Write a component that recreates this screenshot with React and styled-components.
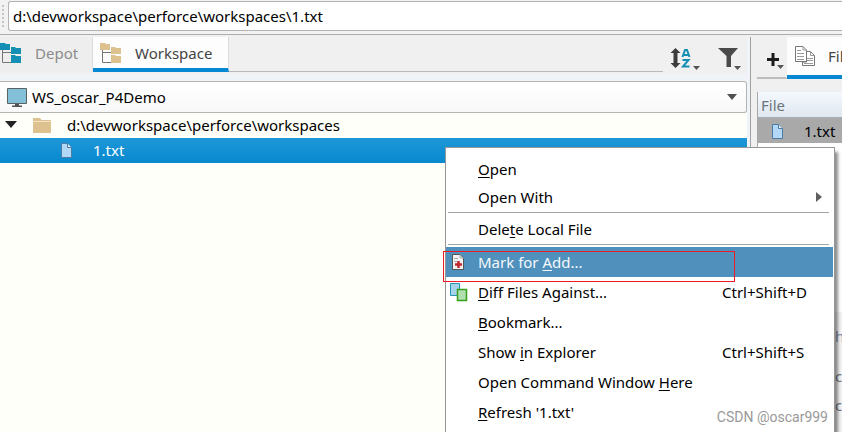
import styled, { createGlobalStyle } from "styled-components";

const GlobalStyle = createGlobalStyle`
* {
box-sizing: border-box;
}
body {
margin: 0;
background-color: #f0f0f0;
font-family: "Noto Sans", "Open Sans", sans-serif;
font-size: 15px;
line-height: 20px;
color: #000;
}
button, input, select {
font: inherit;
color: inherit;
margin: 0;
padding: 0;
border: none;
background: none;
outline: none;
}
`;

const Window = styled.div`position: relative;
height: 100vh;
display: flex;
flex-direction: column;
overflow: hidden;
`;
const AddressBar = styled.header`display: flex;
align-items: center;
gap: 4px;
padding: 1px 0 3px 2px;
border-bottom: 1px solid #adadad;
background-color: #f2f2f2;
`;
const Grip = styled.span`width: 2px;
height: 22px;
background: repeating-linear-gradient(#c4c4c4 0 2px, transparent 2px 4px);
`;
const Address = styled.input`flex: 1;
min-width: 0;
height: 30px;
padding: 0 4px;
border: 1px solid #b4b4b4;
border-right: none;
border-radius: 3px 0 0 3px;
background-color: #fff;
`;
const Main = styled.main`flex: 1;
min-height: 0;
display: flex;
padding-top: 2px;
`;
const LeftPane = styled.section`flex: 1;
min-width: 0;
display: flex;
flex-direction: column;
padding-right: 3px;
border-right: 1px solid #a0a0a0;
background-color: #f0f4f9;
`;
const RightPane = styled.section`flex: 0 0 91px;
display: flex;
flex-direction: column;
padding-left: 6px;
overflow: hidden;
`;
const TabBar = styled.div`display: flex;
height: 37px;
background-color: #f0f0f0;
`;
const TabList = styled.div`flex: 1;
height: 35px;
display: flex;
border-bottom: 1px solid #b8b8b8;
`;
const Tab = styled.button`height: ${p => p.$height || 35}px;
width: ${p => p.$width}px;
flex-shrink: 0;
display: flex;
align-items: center;
gap: 13px;
padding-left: ${p => p.$inset || 0}px;
color: ${p => (p.$active ? "#444" : "#8c8c8c")};
background-color: ${p => (p.$active ? "#fdfdfd" : "#eeeeee")};
border-bottom: 4px solid ${p => (p.$active ? "#0588d1" : "#eeeeee")};
border-right: 1px solid #dcdcdc;
white-space: nowrap;
`;
const Tools = styled.div`display: flex;
align-items: center;
gap: 18px;
padding: 6px 5px 0 7px;
`;
const ToolButton = styled.button`display: flex;
`;
const WorkspaceField = styled.label`display: flex;
align-items: center;
gap: 5px;
height: 32px;
margin-top: 7px;
padding: 0 9px 0 7px;
border: 1px solid #b4b4b4;
border-left: none;
border-radius: 0 3px 3px 0;
background: linear-gradient(#fff, #f8f8f8);
`;
const WorkspaceSelect = styled.select`flex: 1;
min-width: 0;
appearance: none;
`;
const Tree = styled.ul`flex: 1;
margin: 0;
padding: 0;
list-style: none;
background-color: #fffff9;
`;
const TreeRow = styled.li`display: flex;
align-items: center;
height: 25px;
gap: ${p => (p.$selected ? 21 : 16)}px;
padding: 0 0 2px ${p => (p.$selected ? 60 : 5)}px;
color: ${p => (p.$selected ? "#fff" : "#000")};
background: ${p => (p.$selected ? "linear-gradient(#1e97d8, #0789cf)" : "none")};
`;
const AddTab = styled.button`width: 30px;
flex-shrink: 0;
height: 42px;
padding: 10px 0 0 6px;
border-right: 1px solid #f0f0f0;
border-bottom: 2px solid #bdbdbd;
`;
const Files = styled.div`height: 220px;
margin-top: 18px;
border-left: 1px solid #a8a8a8;
background-color: #fff;
`;
const FileTable = styled.table`width: 100%;
border-collapse: collapse;
`;
const HeadCell = styled.th`height: 26px;
padding: 0 3px;
border-bottom: 2px solid #a9adb1;
background: linear-gradient(#f4f9fe, #dfe7ef);
color: #6b747c;
font-weight: 400;
text-align: left;
`;
const FileCell = styled.td`height: 25px;
padding: 0;
background-color: #a9a9a9;
`;
const FileName = styled.div`display: flex;
align-items: center;
gap: 21px;
padding-left: 13px;
`;
const Details = styled.div`flex: 1;
padding: 14px 0 0 78px;
background-color: #f2f2f2;
color: #6f7684;
`;
const DetailTitle = styled.p`margin: 0 0 20px;
color: #8492ab;
`;
const DetailLine = styled.p`margin: 0 0 9px;
`;
const Menu = styled.div`position: absolute;
top: 147px;
left: 445px;
width: 390px;
padding: 7px 1px 5px 0;
border: 1px solid #979797;
background-color: #fff;
box-shadow: 3px 5px 3px rgba(0, 0, 0, 0.45);
`;
const MenuItem = styled.button`position: relative;
width: 100%;
height: ${p => (p.$compact ? 28 : 30)}px;
display: grid;
grid-template-columns: 28px 1fr 111px;
align-items: center;
padding: 0 0 1px 4px;
text-align: left;
white-space: nowrap;
color: ${p => (p.$active ? "#f4f8fb" : "#000")};
background-color: ${p => (p.$active ? "#4f90bc" : "transparent")};
u {
text-decoration-thickness: 1px;
text-underline-offset: 2px;
}
`;
const SubmenuArrow = styled.svg`justify-self: end;
margin-right: 11px;
`;
const Separator = styled.hr`height: 1px;
margin: 1px 4px 2px 2px;
border: none;
background-color: #a5a5a5;
`;
const Highlight = styled.span`position: absolute;
top: 4px;
left: -3px;
width: 292px;
height: 31px;
border: 1px solid #ed1c24;
z-index: 1;
`;
const Watermark = styled.span`position: absolute;
right: 14px;
bottom: 5px;
font-family: Roboto, sans-serif;
font-size: 14px;
color: #999;
`;

const TreeIcon = ({ color }) => (
    <svg width="22" height="22" viewBox="0 0 22 22" aria-hidden="true">
        <path d="M2.500 6V20.500H11M2.500 10.500H11" fill="none" stroke="#777" />
        <path d="M0 1H5L6 2H10V8H0ZM11 5H15L16 6H21V12H11ZM11 13H15L16 14H21V21H11Z" fill={color} />
    </svg>
);

const FileIcon = () => (
    <svg width="12" height="16" viewBox="0 0 12 16" aria-hidden="true">
        <path d="M1.500 1.500H7.500L11.500 5.500V15.500H1.500Z" fill="#b3d8f7" stroke="#4c7ba3" />
        <path d="M7.500 1.500V5.500H11.500" fill="#e4f2fd" stroke="#4c7ba3" />
    </svg>
);

const SortIcon = () => (
    <svg width="30" height="24" viewBox="0 0 30 24" aria-hidden="true">
        <path d="M5.500 1L10.500 6H7.500V16H10.500L5.500 21L.5 16H3.500V6H.5Z" fill="#3c3c3c" />
        <path d="M12.500 10L15 3H17L19.500 10M13.500 8H18.500M12.500 13H18.500L13 19.500H19.500" fill="none" stroke="#168fb5" strokeWidth="2" />
        <path d="M23 19H30L26.500 23Z" fill="#555" />
    </svg>
);

const FilterIcon = () => (
    <svg width="24" height="24" viewBox="0 0 24 24" aria-hidden="true">
        <path d="M0 1H20L13 9V20H8.500V9Z" fill="#4a4a4a" />
        <path d="M16 19H23L19.500 23Z" fill="#555" />
    </svg>
);

const PlusIcon = () => (
    <svg width="19" height="18" viewBox="0 0 19 18" aria-hidden="true">
        <path d="M8 2V15M2 8.500H14" fill="none" stroke="#1d1d1d" strokeWidth="3" />
        <path d="M12 14H19L15.500 18Z" fill="#555" />
    </svg>
);

const CopyIcon = () => (
    <svg width="20" height="21" viewBox="0 0 20 21" aria-hidden="true">
        <path d="M.5 .5H8L11.500 4V15.500H.5Z" fill="#fff" stroke="#777" />
        <path d="M8 .5V4H11.500M2 4.500H6M2 7.500H9M2 10.500H9M2 13.500H9" fill="none" stroke="#999" />
        <path d="M11.500 5.500H15.500L19.500 9.500V19.500H7.500V16H11.500Z" fill="#fff" stroke="#777" />
        <path d="M15.500 5.500V9.500H19.500M12 12.500H18M12 14.500H18M9 17.500H18" fill="none" stroke="#999" />
    </svg>
);

const MonitorIcon = () => (
    <svg width="20" height="20" viewBox="0 0 20 20" aria-hidden="true">
        <path d="M.5 1.500H19.500V16.500H.5Z" fill="#82c0d8" stroke="#5a6266" />
        <path d="M8 17H12V18.500H15V20H5V18.500H8Z" fill="#555" />
    </svg>
);

const FolderIcon = () => (
    <svg width="18" height="16" viewBox="0 0 18 16" aria-hidden="true">
        <path d="M0 1H7L8.500 3H18V16H0Z" fill="#ddc28f" />
        <path d="M0 4.500H18" stroke="#f2e4c7" />
    </svg>
);

const AddIcon = () => (
    <svg width="16" height="18" viewBox="0 0 16 18" aria-hidden="true">
        <path d="M2.500 1.500H10L13.500 5V16.500H2.500Z" fill="#f3f3f3" stroke="#555" />
        <path d="M10 1.500V5H13.500M4 5.500H8M4 8.500H7" fill="none" stroke="#aaa" />
        <path d="M8.500 8V15M5 11.500H12" stroke="#c1272d" strokeWidth="2.500" />
    </svg>
);

const DiffIcon = () => (
    <svg width="18" height="20" viewBox="0 0 18 20" aria-hidden="true">
        <path d="M.5 1.500H9.500V13.500H.5Z" fill="#a5d4e8" stroke="#2695b5" />
        <path d="M7.500 7.500H16.500V18.500H7.500Z" fill="#b2dfaf" stroke="#35a01c" strokeWidth="1.500" />
    </svg>
);

const DownArrow = ({ size = 10, color = "#505050" }) => (
    <svg width={size} height={size / 2 + 1} viewBox="0 0 10 6" preserveAspectRatio="none" aria-hidden="true">
        <path d="M0 0H10L5 6Z" fill={color} />
    </svg>
);

const App = () => {
    return (
        <Window>
            <GlobalStyle />
            <AddressBar>
                <Grip />
                <Address aria-label="Address" defaultValue={"d:\\devworkspace\\perforce\\workspaces\\1.txt"} />
            </AddressBar>
            <Main>
                <LeftPane>
                    <TabBar>
                        <TabList role="tablist">
                            <Tab role="tab" $width={93}><TreeIcon color="#168fb5" />Depot</Tab>
                            <Tab role="tab" aria-selected="true" $active $width={136} $inset={7}>
                                <TreeIcon color="#ddc28f" />Workspace
                            </Tab>
                        </TabList>
                        <Tools>
                            <ToolButton aria-label="Sort"><SortIcon /></ToolButton>
                            <ToolButton aria-label="Filter"><FilterIcon /></ToolButton>
                        </Tools>
                    </TabBar>
                    <WorkspaceField>
                        <MonitorIcon />
                        <WorkspaceSelect aria-label="Workspace">
                            <option>WS_oscar_P4Demo</option>
                        </WorkspaceSelect>
                        <DownArrow />
                    </WorkspaceField>
                    <Tree>
                        <TreeRow>
                            <DownArrow size={12} color="#222" />
                            <FolderIcon />
                            <span>{"d:\\devworkspace\\perforce\\workspaces"}</span>
                        </TreeRow>
                        <TreeRow $selected><FileIcon />1.txt</TreeRow>
                    </Tree>
                </LeftPane>
                <RightPane>
                    <TabBar>
                        <AddTab aria-label="New tab"><PlusIcon /></AddTab>
                        <Tab role="tab" $active $width={120} $height={42} $inset={8}><CopyIcon />Files</Tab>
                    </TabBar>
                    <Files>
                        <FileTable>
                            <thead><tr><HeadCell>File</HeadCell></tr></thead>
                            <tbody><tr><FileCell><FileName><FileIcon />1.txt</FileName></FileCell></tr></tbody>
                        </FileTable>
                    </Files>
                    <Details>
                        <DetailTitle>h</DetailTitle>
                        <DetailLine>c</DetailLine>
                        <DetailLine>c</DetailLine>
                    </Details>
                </RightPane>
            </Main>
            <Menu role="menu">
                <MenuItem role="menuitem" $compact><i /><span><u>O</u>pen</span></MenuItem>
                <MenuItem role="menuitem" $compact>
                    <i /><span>Open With</span>
                    <SubmenuArrow width="6" height="10" viewBox="0 0 6 10" aria-hidden="true">
                        <path d="M0 0L6 5L0 10Z" fill="#606060" />
                    </SubmenuArrow>
                </MenuItem>
                <Separator />
                <MenuItem role="menuitem" $compact><i /><span>Dele<u>t</u>e Local File</span></MenuItem>
                <Separator />
                <MenuItem role="menuitem" $active>
                    <AddIcon /><span>Mark for <u>A</u>dd...</span>
                    <Highlight />
                </MenuItem>
                <MenuItem role="menuitem"><DiffIcon /><span><u>D</u>iff Files Against...</span>Ctrl+Shift+D</MenuItem>
                <MenuItem role="menuitem"><i /><span><u>B</u>ookmark...</span></MenuItem>
                <MenuItem role="menuitem"><i /><span>Show <u>i</u>n Explorer</span>Ctrl+Shift+S</MenuItem>
                <MenuItem role="menuitem"><i /><span>Open Command Window <u>H</u>ere</span></MenuItem>
                <MenuItem role="menuitem"><i /><span><u>R</u>efresh '1.txt'</span></MenuItem>
            </Menu>
            <Watermark>CSDN @oscar999</Watermark>
        </Window>);
};

export default App;
